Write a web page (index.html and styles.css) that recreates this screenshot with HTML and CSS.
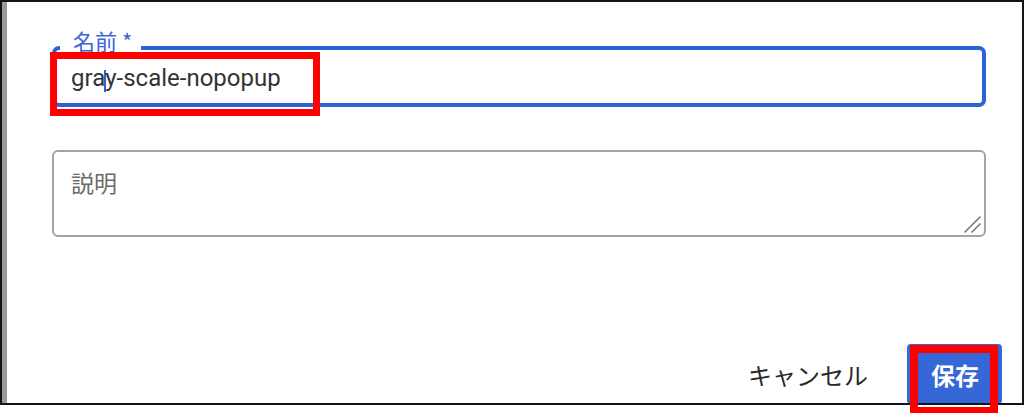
FILE: index.html
```html
<!DOCTYPE html>
<html lang="ja">
<head>
<meta charset="utf-8">
<title>名前</title>
<link rel="stylesheet" href="styles.css">
</head>
<body>
<div class="frame">
  <div class="strip"></div>
  <div class="dialog">
    <div class="name-field">
      <span class="float-label">名前 *</span>
      <div class="name-value">gra<span class="caret"></span>y-scale-nopopup</div>
    </div>
    <div class="desc-wrap">
      <textarea class="desc" placeholder="説明"></textarea>
      <svg class="grip" width="18" height="17" viewBox="0 0 18 17" aria-hidden="true">
        <path d="M1 16 L16 1 M8 16 L16 8" stroke="#7a7a7a" stroke-width="1.6" fill="none" stroke-linecap="round"/>
      </svg>
    </div>
    <div class="actions">
      <button class="btn-cancel">キャンセル</button>
      <button class="btn-save">保存</button>
    </div>
  </div>
</div>
<div class="mark mark-name"></div>
<div class="mark mark-save"></div>
</body>
</html>
```
FILE: styles.css
```css
html, body {
  margin: 0;
  height: 413px;
  background: #fff;
  overflow: hidden;
}
body {
  position: relative;
  font-family: Roboto, "Noto Sans CJK JP", sans-serif;
}
.frame {
  box-sizing: border-box;
  width: 1024px;
  height: 405px;
  border: 2px solid #141414;
  display: flex;
  overflow: hidden;
}
.strip {
  flex: none;
  width: 5px;
  background: #9a9a9a;
}
.dialog {
  flex: 1;
  min-width: 0;
  display: flex;
  flex-direction: column;
  padding: 44px 20px 0 45px;
}
.name-field {
  position: relative;
  box-sizing: border-box;
  height: 64px;
  margin-right: 16px;
  padding: 3px 0 0 15px;
  border: 4px solid #2c62d6;
  border-radius: 7px;
}
.float-label {
  position: absolute;
  top: -23px;
  left: 4px;
  padding: 0 9px 0 13px;
  background: #fff;
  color: #3a66d8;
  font: 22px/26px "Noto Sans CJK JP", sans-serif;
}
.name-value {
  font: 24px/50px Roboto, "Noto Sans CJK JP", sans-serif;
  color: #333;
  white-space: nowrap;
}
.caret {
  display: inline-block;
  width: 2px;
  height: 22px;
  margin: 0 -1px;
  background: #2c62d6;
  vertical-align: -6px;
}
.desc-wrap {
  position: relative;
  margin: 43px 16px 0 0;
}
.desc {
  display: block;
  box-sizing: border-box;
  width: 100%;
  height: 87px;
  margin: 0;
  padding: 16px 17px;
  border: 2px solid #a4a4a4;
  border-radius: 6px;
  font: 23px/28px "Noto Sans CJK JP", sans-serif;
  color: #333;
  resize: none;
  outline: none;
}
.desc::placeholder {
  color: #6b6b6b;
}
.grip {
  position: absolute;
  right: 4px;
  bottom: 4px;
}
.actions {
  display: flex;
  justify-content: flex-end;
  align-items: center;
  margin-top: 107px;
}
.btn-cancel {
  height: 60px;
  margin-right: 19px;
  padding: 0 20px;
  border: 0;
  background: none;
  color: #2a2a2a;
  font: 24px "Noto Sans CJK JP", sans-serif;
}
.btn-save {
  height: 60px;
  padding: 0 23px 0 24px;
  border: 0;
  border-radius: 4px;
  background: #3667d6;
  color: #fff;
  font: 700 24px "Noto Sans CJK JP", sans-serif;
}
.mark {
  position: absolute;
  box-sizing: border-box;
  border: 7px solid #f00;
}
.mark-name {
  left: 50px;
  top: 52px;
  width: 270px;
  height: 64px;
}
.mark-save {
  left: 910px;
  top: 345px;
  width: 88px;
  height: 70px;
  border-width: 8px;
}
```
